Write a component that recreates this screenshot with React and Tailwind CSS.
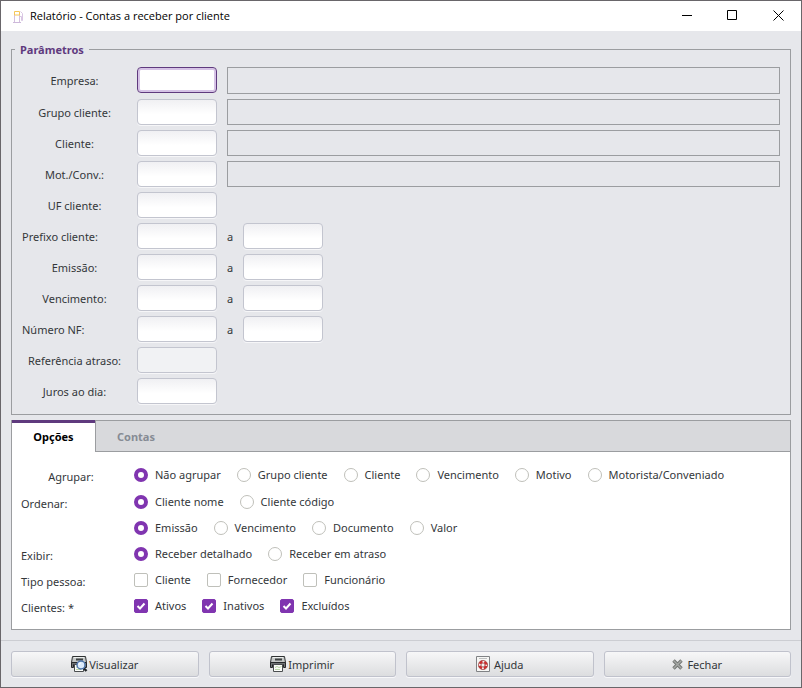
import React, { useState } from 'react'

const filters = [
  { id: 'empresa', label: 'Empresa:', lookup: true, active: true },
  { id: 'grupo', label: 'Grupo cliente:', lookup: true },
  { id: 'cliente', label: 'Cliente:', lookup: true },
  { id: 'motorista', label: 'Mot./Conv.:', lookup: true },
  { id: 'uf', label: 'UF cliente:' },
  { id: 'prefixo', label: 'Prefixo cliente:', range: true, left: true },
  { id: 'emissao', label: 'Emissão:', range: true },
  { id: 'vencimento', label: 'Vencimento:', range: true },
  { id: 'numero', label: 'Número NF:', range: true, left: true },
  { id: 'referencia', label: 'Referência atraso:', disabled: true },
  { id: 'juros', label: 'Juros ao dia:' },
]

const options = [
  { id: 'agrupar', label: 'Agrupar:', center: true, type: 'radio', items: ['Não agrupar', 'Grupo cliente', 'Cliente', 'Vencimento', 'Motivo', 'Motorista/Conveniado'], on: ['Não agrupar'] },
  { id: 'ordenar', label: 'Ordenar:', type: 'radio', items: ['Cliente nome', 'Cliente código'], on: ['Cliente nome'] },
  { id: 'ordenar2', label: '', type: 'radio', items: ['Emissão', 'Vencimento', 'Documento', 'Valor'], on: ['Emissão'] },
  { id: 'exibir', label: 'Exibir:', type: 'radio', items: ['Receber detalhado', 'Receber em atraso'], on: ['Receber detalhado'] },
  { id: 'tipo', label: 'Tipo pessoa:', type: 'checkbox', items: ['Cliente', 'Fornecedor', 'Funcionário'], on: [] },
  { id: 'clientes', label: 'Clientes: *', type: 'checkbox', items: ['Ativos', 'Inativos', 'Excluídos'], on: ['Ativos', 'Inativos', 'Excluídos'] },
]

const PumpIcon = () => (
  <svg width="12" height="13" viewBox="0 0 12 13" fill="none">
    <path d="M2.5 12V5M7.5 12V5" stroke="#d3bfe0" />
    <path d="M1 12.5h8" stroke="#cdb8da" />
    <path d="M2.5 5V1.5h5V5z" stroke="#f6c758" />
    <path d="M8 6.5h1.5v4h1V3.5L8.5 1.5" stroke="#d9c6e3" />
  </svg>
)

const PrinterIcon = ({ preview }) => (
  <svg width="17" height="16" viewBox="0 0 17 16">
    <path d="M1.5.5h13l1 6h-15z" fill="#c4c7c6" stroke="#2f3233" />
    <path d="M3 1.5h10" stroke="#eef0ef" />
    <path d="M5 2.5h7v2H5z" fill="#3f4243" />
    <path d="M.5 6.5h15v5h-2v-3h-11v3h-2z" fill="#6f7374" stroke="#26282a" />
    <path d="M3.5 8.5h9v7h-9z" fill="#fbfcf9" stroke="#4b4e50" />
    <path d="M5 11.5l2-1 2 1 2.5-1M5 13.5h5" stroke="#b9d6a6" fill="none" />
    {preview && (
      <>
        <path d="M12.5 12l3 3" stroke="#202428" strokeWidth="2.4" />
        <circle cx="10" cy="9" r="4" fill="#dcebfb" stroke="#4c74ab" strokeWidth="1.4" />
        <path d="M8 9a2 2 0 0 1 2-2" stroke="#fff" fill="none" />
      </>
    )}
  </svg>
)

const HelpIcon = () => (
  <svg width="14" height="16" viewBox="0 0 14 16" fill="none">
    <path d="M.5.5h13v15H.5z" fill="#f7f7f5" stroke="#808285" />
    <path d="M3 2.5h8" stroke="#bfc0c0" />
    <circle cx="7" cy="9" r="3.4" stroke="#f3efee" strokeWidth="2.4" />
    <circle cx="7" cy="9" r="3.4" stroke="#cf2c2c" strokeWidth="2.6" strokeDasharray="3.4 1.94" strokeDashoffset="-.97" />
    <circle cx="7" cy="9" r="4.6" stroke="#a04a4a" strokeWidth=".8" />
    <circle cx="7" cy="9" r="2" stroke="#a04a4a" strokeWidth=".8" />
  </svg>
)

const CloseIcon = () => (
  <svg width="11" height="11" viewBox="0 0 11 11">
    <path d="M1.5 1.5l8 8M9.5 1.5l-8 8" stroke="#737673" strokeWidth="3.4" />
    <path d="M1.5 1.5l8 8M9.5 1.5l-8 8" stroke="#a6a9a6" strokeWidth="1.4" />
  </svg>
)

const TextBox = ({ id, active, disabled, label }) => (
  <input
    id={id}
    type="text"
    disabled={disabled}
    aria-label={label}
    className={`h-[26px] w-20 rounded border px-2 outline-none ${
      active
        ? 'border-[#5f3a7e] bg-white ring-2 ring-inset ring-[#d6c3e6]'
        : disabled
          ? 'border-[#c3c5cf] bg-[#f1f2f4] shadow-[0_1px_0_#f6f6f8]'
          : 'border-[#c3c5cf] bg-linear-to-b from-[#f0f0f3] to-white to-60% shadow-[0_1px_0_#f6f6f8]'
    }`}
  />
)

const Option = ({ type, name, label, checked }) => (
  <label className="flex items-center gap-[7px]">
    <span className="grid place-items-center">
      <input
        type={type}
        name={name}
        defaultChecked={checked}
        className={
          type === 'radio'
            ? 'peer col-start-1 row-start-1 h-3.5 w-3.5 appearance-none rounded-full border border-[#bfc0ba] bg-white checked:border-4 checked:border-[#8035b0]'
            : 'peer col-start-1 row-start-1 h-3.5 w-3.5 appearance-none rounded-[2px] border border-[#bfc0ba] bg-white checked:border-[#8035b0] checked:bg-[#8035b0]'
        }
      />
      {type === 'checkbox' && (
        <svg width="14" height="14" viewBox="0 0 14 14" fill="none" className="pointer-events-none invisible col-start-1 row-start-1 peer-checked:visible">
          <path d="M3.5 7l2.5 2.5 4.5-5" stroke="white" strokeWidth="2" />
        </svg>
      )}
    </span>
    <span>{label}</span>
  </label>
)

const ActionButton = ({ icon, children, wide }) => (
  <button
    type="button"
    className={`flex h-[26px] items-center justify-center rounded-[3px] border border-[#c0c2cc] bg-linear-to-b from-[#f7f7f8] to-[#dcdddf] shadow-[0_1px_0_#f8f8fa] ${wide ? 'gap-1' : 'gap-px'}`}
  >
    {icon}
    <span className="pt-0.5">{children}</span>
  </button>
)

const App = () => {
  const [tab, setTab] = useState('opcoes')

  return (
    <div className="flex min-h-screen flex-col border border-[#69666a] bg-[#e6e7eb] font-['Noto_Sans',sans-serif] text-[11px] text-[#34373a]">
      <header className="flex h-[30px] items-center bg-white text-black">
        <div className="flex flex-1 items-center gap-[6px] pl-[11px]">
          <PumpIcon />
          <h1 className="font-['Open_Sans',sans-serif]">Relatório - Contas a receber por cliente</h1>
        </div>
        <button type="button" aria-label="Minimizar" className="flex h-full w-[46px] items-center justify-center pb-px">
          <svg width="11" height="11" stroke="currentColor" fill="none"><path d="M1 5.5h10" /></svg>
        </button>
        <button type="button" aria-label="Maximizar" className="flex h-full w-[46px] items-center justify-center pb-px">
          <svg width="11" height="11" stroke="currentColor" fill="none"><path d="M.5.5h9v9h-9z" /></svg>
        </button>
        <button type="button" aria-label="Fechar janela" className="flex h-full w-[46px] items-center justify-center pb-px">
          <svg width="11" height="11" stroke="currentColor" fill="none"><path d="M.5.5l10 10M10.5.5l-10 10" /></svg>
        </button>
      </header>

      <main className="flex flex-1 flex-col gap-[5px] px-2.5 pt-[9px] pb-2.5">
        <fieldset className="border border-[#9b9da0] px-2.5 pb-2.5">
          <legend className="-ml-[7px] px-[5px] pt-0.5 font-bold leading-4 text-[#5f3a7e]">Parâmetros</legend>
          <div className="flex flex-col gap-[5px] pt-[9px]">
            {filters.map((f) => (
              <div key={f.id} className="flex items-start gap-2.5">
                <label htmlFor={f.id} className={`h-[26px] w-[105px] leading-7 ${f.left ? 'text-left' : 'text-center'}`}>
                  {f.label}
                </label>
                <TextBox id={f.id} active={f.active} disabled={f.disabled} />
                {f.lookup && (
                  <input
                    type="text"
                    readOnly
                    aria-label={`${f.label} descrição`}
                    className={`flex-1 border border-[#9b9da0] px-2 outline-none ${f.active ? 'h-[27px]' : 'h-[26px]'}`}
                  />
                )}
                {f.range && (
                  <>
                    <span className="h-[26px] w-1.5 leading-7">a</span>
                    <TextBox id={`${f.id}-fim`} label={`${f.label} até`} />
                  </>
                )}
              </div>
            ))}
          </div>
        </fieldset>

        <section className="flex flex-1 flex-col border border-[#9b9da0] bg-white">
          <div role="tablist" className="flex h-[31px] font-bold">
            <button
              type="button"
              role="tab"
              aria-selected={tab === 'opcoes'}
              onClick={() => setTab('opcoes')}
              className="-mt-px w-[83px] border-t-3 border-[#5f3a7e] pb-px text-black"
            >
              Opções
            </button>
            <div className="flex flex-1 border-b border-l border-[#9b9da0] bg-[#d8d9dc]">
              <button
                type="button"
                role="tab"
                aria-selected={tab === 'contas'}
                onClick={() => setTab('contas')}
                className="px-[21px] pt-0.5 text-[#868b94]"
              >
                Contas
              </button>
            </div>
          </div>
          <div role="tabpanel" className="flex flex-col px-[9px] pt-2.5 pb-2.5">
            {options.map((o) => (
              <div
                key={o.id}
                role={o.type === 'radio' ? 'radiogroup' : 'group'}
                aria-label={o.label || 'Ordenar por'}
                className={`flex h-[26px] items-center ${o.center ? 'mb-px' : ''}`}
              >
                <span className={`mr-[13px] w-[100px] pt-1 ${o.center ? 'text-center' : ''}`}>{o.label}</span>
                <div className="flex gap-4">
                  {o.items.map((item) => (
                    <Option key={item} type={o.type} name={o.id} label={item} checked={o.on.includes(item)} />
                  ))}
                </div>
              </div>
            ))}
          </div>
        </section>
      </main>

      <footer className="grid grid-cols-4 gap-2.5 border-t border-[#cccdd2] px-2.5 py-2.5">
        <ActionButton icon={<PrinterIcon preview />}>Visualizar</ActionButton>
        <ActionButton icon={<PrinterIcon />}>Imprimir</ActionButton>
        <ActionButton icon={<HelpIcon />} wide>Ajuda</ActionButton>
        <ActionButton icon={<CloseIcon />} wide>Fechar</ActionButton>
      </footer>
    </div>
  )
}

export default App
